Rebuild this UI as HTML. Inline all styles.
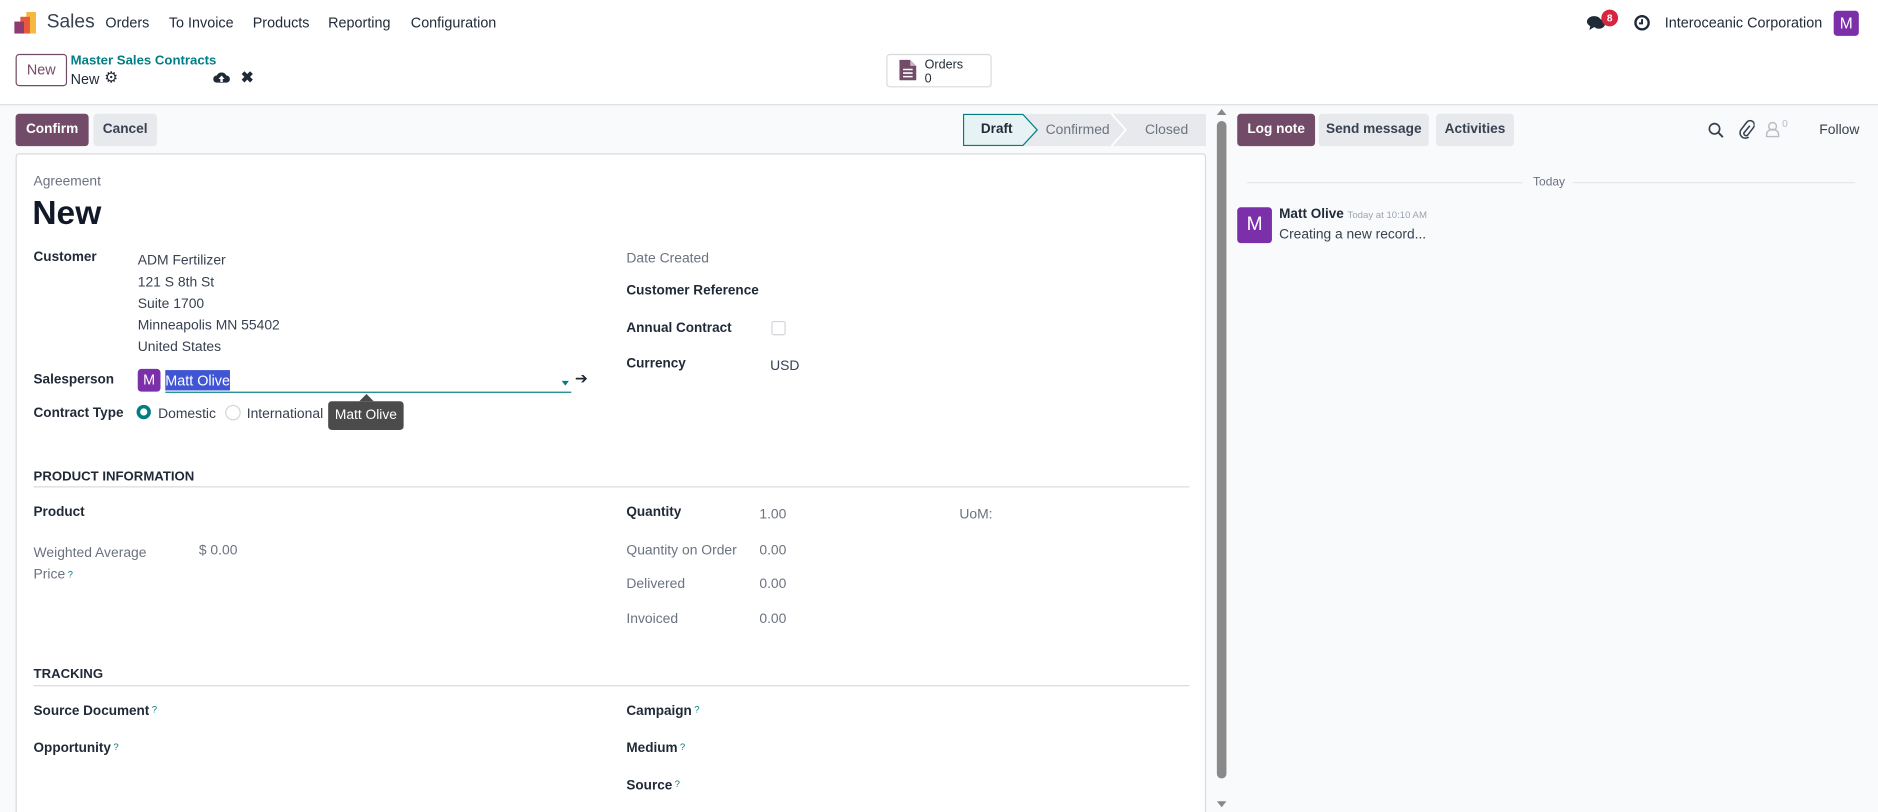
<!DOCTYPE html>
<html><head><meta charset="utf-8"><style>
html,body{margin:0;padding:0;width:1878px;height:812px;overflow:hidden;background:#fff}
#w{position:absolute;left:0;top:0;width:1568px;height:678px;overflow:hidden;transform:scale(1.1977);transform-origin:0 0;font-family:"Liberation Sans",sans-serif;color:#374151;font-size:11.6px}
.a{position:absolute;white-space:nowrap}
.b{font-weight:bold;color:#1f2937;font-size:11.3px}
.g{color:#6b7280}
.btn{position:absolute;height:27px;line-height:27px;text-align:center;border-radius:3px;font-weight:bold;font-size:11.4px}
.p{background:#714b67;color:#fff}
.s{background:#e7e9ed;color:#374151}
.q{color:#017e84;font-size:8px;vertical-align:top;margin-left:2px;font-weight:normal}
</style></head><body><div id="w">
<div class="a" style="left:0;top:0;width:1568px;height:38px;background:#fff"></div>
<svg class="a" style="left:11px;top:9px" width="22" height="20"><rect x="11" y="1" width="8" height="18" fill="#f5b841"/><rect x="6" y="5" width="8" height="14" fill="#e8593b"/><rect x="1" y="9" width="8" height="10" fill="#8d3a6e"/></svg>
<div class="a" style="left:39px;top:10px;font-size:16px;color:#374151">Sales</div>
<div class="a" style="left:88px;top:12px;font-size:12px;color:#1f2937">Orders</div>
<div class="a" style="left:141px;top:12px;font-size:12px;color:#1f2937">To Invoice</div>
<div class="a" style="left:211px;top:12px;font-size:12px;color:#1f2937">Products</div>
<div class="a" style="left:274px;top:12px;font-size:12px;color:#1f2937">Reporting</div>
<div class="a" style="left:343px;top:12px;font-size:12px;color:#1f2937">Configuration</div>
<svg class="a" style="left:1325px;top:12px" width="16" height="14"><ellipse cx="6" cy="6" rx="6" ry="4.5" fill="#1f2937"/><path d="M3 9 L2 13 L7 10Z" fill="#1f2937"/><ellipse cx="10" cy="8" rx="5" ry="4" fill="#1f2937"/></svg>
<div class="a" style="left:1337px;top:8px;width:14px;height:14px;border-radius:7px;background:#d6263f;color:#fff;font-size:8.5px;font-weight:bold;text-align:center;line-height:14px">8</div>
<svg class="a" style="left:1364px;top:12px" width="14" height="14"><circle cx="7" cy="7" r="5.5" fill="none" stroke="#1f2937" stroke-width="2"/><path d="M7 4 V7.5 H4.5" stroke="#1f2937" stroke-width="1.6" fill="none"/></svg>
<div class="a" style="left:1390px;top:12px;font-size:12px;color:#1f2937">Interoceanic Corporation</div>
<div class="a" style="left:1531px;top:9px;width:21px;height:21px;border-radius:3px;background:#7b2fa8;color:#fff;text-align:center;line-height:21px;font-size:13px">M</div>
<div class="a" style="left:0;top:87px;width:1568px;height:1px;background:#d8dadd"></div>
<div class="a" style="left:13px;top:45px;width:41px;height:25px;border:1px solid #714b67;border-radius:3px;text-align:center;line-height:25px;font-size:12px;color:#714b67">New</div>
<div class="a" style="left:59px;top:45px;font-size:11px;color:#017e84;font-weight:bold">Master Sales Contracts</div>
<div class="a" style="left:59px;top:59px;font-size:12px;color:#1f2937">New</div>
<div class="a" style="left:87px;top:57px;font-size:13px;color:#1f2937">⚙</div>
<svg class="a" style="left:178px;top:59px" width="14" height="11"><path d="M3 10 A3 3 0 0 1 3 4 A4.5 4.5 0 0 1 11 4 A3 3 0 0 1 11 10Z" fill="#1f2937"/><path d="M7 4 L4.5 7 H6 V9.5 H8 V7 H9.5Z" fill="#fff"/></svg>
<div class="a" style="left:201px;top:57px;font-size:13px;font-weight:bold;color:#1f2937">✖</div>
<div class="a" style="left:740px;top:45px;width:86px;height:26px;border:1px solid #d8dadd;border-radius:3px;background:#fff"></div>
<svg class="a" style="left:750px;top:49px" width="16" height="19"><path d="M1 1 H10 L15 6 V18 H1Z" fill="#714b67"/><path d="M10 1 V6 H15" fill="#fff" opacity=".6"/><path d="M4 9 H12 M4 12 H12 M4 15 H12" stroke="#fff" stroke-width="1.3"/></svg>
<div class="a" style="left:772px;top:48px;font-size:10.5px;color:#1f2937;line-height:12px">Orders<br>0</div>
<div class="a" style="left:0;top:88px;width:1568px;height:590px;background:#f9fafb"></div>
<div class="btn p" style="left:13px;top:95px;width:61px">Confirm</div>
<div class="btn s" style="left:78px;top:95px;width:53px">Cancel</div>
<svg class="a" style="left:804px;top:95px" width="203" height="27"><rect x="0" y="0" width="203" height="27" fill="#e7e9ed"/><path d="M0.5 0.5 H50 L62 13.5 L50 26.5 H0.5Z" fill="#e6f2f3" stroke="#017e84" stroke-width="1"/><path d="M124 0 L136 13.5 L124 27" stroke="#fff" fill="none" stroke-width="1.5"/></svg>
<div class="a b" style="left:819px;top:102px">Draft</div>
<div class="a" style="left:873px;top:102px;color:#6b7280">Confirmed</div>
<div class="a" style="left:956px;top:102px;color:#6b7280">Closed</div>
<div class="a" style="left:13px;top:128px;width:992px;height:580px;background:#fff;border:1px solid #d8dadd;border-radius:3px"></div>
<div class="a g" style="left:28px;top:146px;font-size:11.5px">Agreement</div>
<div class="a" style="left:27px;top:162px;font-size:28px;font-weight:bold;color:#111827">New</div>
<div class="a b" style="left:28px;top:209px">Customer</div>
<div class="a" style="left:115px;top:209px;line-height:18px">ADM Fertilizer<br>121 S 8th St<br>Suite 1700<br>Minneapolis MN 55402<br>United States</div>
<div class="a b" style="left:28px;top:311px">Salesperson</div>
<div class="a" style="left:115px;top:308px;width:19px;height:19px;border-radius:3px;background:#7b2fa8;color:#fff;text-align:center;line-height:19px;font-size:12px">M</div>
<div class="a" style="left:138px;top:309px;width:54px;height:17px;background:#3f55d4"></div>
<div class="a" style="left:138px;top:311px;color:#fff;font-size:12px">Matt Olive</div>
<div class="a" style="left:138px;top:327px;width:339px;height:1px;background:#017e84"></div>
<div class="a" style="left:469px;top:318px;width:0;height:0;border-left:3px solid transparent;border-right:3px solid transparent;border-top:4px solid #017e84"></div>
<div class="a" style="left:480px;top:308px;font-size:13px;color:#1f2937">➔</div>
<div class="a b" style="left:28px;top:339px">Contract Type</div>
<div class="a" style="left:114px;top:338px;width:6px;height:6px;border:3.5px solid #017e84;border-radius:50%"></div>
<div class="a" style="left:132px;top:339px">Domestic</div>
<div class="a" style="left:188px;top:338px;width:11px;height:11px;border:1px solid #d1d5db;border-radius:50%"></div>
<div class="a" style="left:206px;top:339px">International</div>
<div class="a" style="left:300px;top:329px;border-left:6px solid transparent;border-right:6px solid transparent;border-bottom:6px solid #4b4b4b;width:0;height:0"></div>
<div class="a" style="left:274px;top:335px;width:63px;height:24px;background:#4b4b4b;border-radius:3px;color:#fff;text-align:center;line-height:24px;font-size:11.5px">Matt Olive</div>
<div class="a" style="left:523px;top:209px;color:#6b7280">Date Created</div>
<div class="a b" style="left:523px;top:237px">Customer Reference</div>
<div class="a b" style="left:523px;top:268px">Annual Contract</div>
<div class="a" style="left:644px;top:268px;width:10px;height:10px;border:1px solid #d1d5db;border-radius:2px"></div>
<div class="a b" style="left:523px;top:298px">Currency</div>
<div class="a" style="left:643px;top:299px">USD</div>
<div class="a b" style="left:28px;top:392px;font-size:11px">PRODUCT INFORMATION</div>
<div class="a" style="left:28px;top:406px;width:965px;height:1px;background:#d8dadd"></div>
<div class="a b" style="left:28px;top:422px">Product</div>
<div class="a g" style="left:28px;top:453px;line-height:18px">Weighted Average<br>Price<span class="q">?</span></div>
<div class="a g" style="left:166px;top:453px">$ 0.00</div>
<div class="a b" style="left:523px;top:422px">Quantity</div>
<div class="a g" style="left:634px;top:423px">1.00</div>
<div class="a g" style="left:801px;top:423px">UoM:</div>
<div class="a g" style="left:523px;top:453px">Quantity on Order</div>
<div class="a g" style="left:634px;top:453px">0.00</div>
<div class="a g" style="left:523px;top:481px">Delivered</div>
<div class="a g" style="left:634px;top:481px">0.00</div>
<div class="a g" style="left:523px;top:510px">Invoiced</div>
<div class="a g" style="left:634px;top:510px">0.00</div>
<div class="a b" style="left:28px;top:557px;font-size:11px">TRACKING</div>
<div class="a" style="left:28px;top:572px;width:965px;height:1px;background:#d8dadd"></div>
<div class="a b" style="left:28px;top:588px">Source Document<span class="q">?</span></div>
<div class="a b" style="left:28px;top:619px">Opportunity<span class="q">?</span></div>
<div class="a b" style="left:523px;top:588px">Campaign<span class="q">?</span></div>
<div class="a b" style="left:523px;top:619px">Medium<span class="q">?</span></div>
<div class="a b" style="left:523px;top:650px">Source<span class="q">?</span></div>
<div class="a" style="left:1016px;top:91px;border-left:4px solid transparent;border-right:4px solid transparent;border-bottom:5px solid #888;width:0;height:0"></div>
<div class="a" style="left:1016px;top:101px;width:8px;height:549px;background:#8a8a8a;border-radius:4px"></div>
<div class="a" style="left:1016px;top:669px;border-left:4px solid transparent;border-right:4px solid transparent;border-top:5px solid #888;width:0;height:0"></div>
<div class="btn p" style="left:1033px;top:95px;width:65px">Log note</div>
<div class="btn s" style="left:1101px;top:95px;width:92px">Send message</div>
<div class="btn s" style="left:1199px;top:95px;width:65px">Activities</div>
<svg class="a" style="left:1426px;top:102px" width="14" height="14"><circle cx="5.5" cy="5.5" r="4.3" fill="none" stroke="#374151" stroke-width="1.4"/><path d="M8.7 8.7 L12.5 12.5" stroke="#374151" stroke-width="1.6"/></svg>
<svg class="a" style="left:1451px;top:100px" width="14" height="16"><path d="M10 5 L5 11 A2 2 0 0 0 8 13 L13 6.5 A3.5 3.5 0 0 0 7.5 2 L2.5 8.5 A4.5 4.5 0 0 0 9 14.5" fill="none" stroke="#374151" stroke-width="1.3"/></svg>
<svg class="a" style="left:1474px;top:101px" width="12" height="14"><circle cx="6" cy="4.5" r="3.2" fill="none" stroke="#b8bcc4" stroke-width="1.2"/><path d="M1 13 V11 A5 4 0 0 1 11 11 V13Z" fill="none" stroke="#b8bcc4" stroke-width="1.2"/></svg>
<div class="a" style="left:1488px;top:98px;font-size:8.5px;color:#b8bcc4">0</div>
<div class="a" style="left:1519px;top:102px;color:#374151">Follow</div>
<div class="a" style="left:1041px;top:152px;width:230px;height:1px;background:#e5e7eb"></div>
<div class="a" style="left:1313px;top:152px;width:236px;height:1px;background:#e5e7eb"></div>
<div class="a g" style="left:1280px;top:147px;font-size:10px">Today</div>
<div class="a" style="left:1033px;top:173px;width:29px;height:30px;border-radius:3px;background:#7b2fa8;color:#fff;text-align:center;line-height:30px;font-size:16px">M</div>
<div class="a b" style="left:1068px;top:173px;font-size:11.3px">Matt Olive <span style="font-weight:normal;color:#9ca3af;font-size:8px">Today at 10:10 AM</span></div>
<div class="a" style="left:1068px;top:190px;font-size:11.5px;color:#374151">Creating a new record...</div>
</div></body></html>
